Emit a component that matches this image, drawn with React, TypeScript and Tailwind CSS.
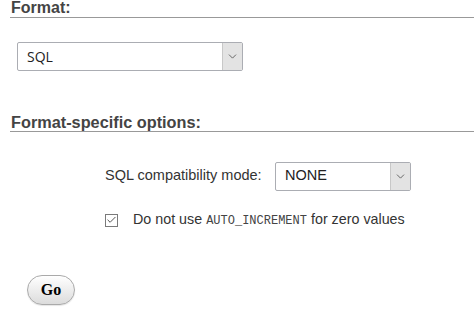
import { Check, ChevronDown } from "lucide-react";

function Select({ value, width, font }: { value: string; width: string; font: string }) {
  return (
    <div
      className={`${width} h-[29px] flex items-stretch border border-[#abadb3] bg-white rounded-[2px] text-[#222] ${font}`}
    >
      <div className="flex-1 flex items-center pl-[9px]">{value}</div>
      <div className="w-[20px] flex items-center justify-center bg-[#e3e3e3] border-l border-[#c8c8c8]">
        <ChevronDown size={13} strokeWidth={1.6} className="text-[#555]" />
      </div>
    </div>
  );
}

export default function App() {
  return (
    <div className="w-[474px] h-[317px] bg-white pl-[10px] font-['Liberation_Sans',Arial,sans-serif] text-[#333]">
      <h2 className="h-[18px] leading-[16px] pl-[1px] text-[16px] font-bold text-[#444] border-b border-[#999]">
        Format:
      </h2>

      <div className="mt-[24px] ml-[7px]">
        <Select value="SQL" width="w-[226px]" font="font-['Open_Sans',sans-serif] text-[14px]" />
      </div>

      <h2 className="mt-[43px] h-[18px] leading-[16px] pl-[1px] text-[16.3px] font-bold text-[#444] border-b border-[#999]">
        Format-specific options:
      </h2>

      <div className="ml-[95px]">
        <div className="mt-[30px] flex items-center h-[28px]">
          <label className="text-[14.5px] w-[170px]">SQL compatibility mode:</label>
          <Select value="NONE" width="w-[136px]" font="font-['Liberation_Sans',Arial,sans-serif] text-[14.5px]" />
        </div>

        <div className="mt-[21px] flex items-center h-[18px] text-[14.3px]">
          <span className="w-[13px] h-[13px] border border-[#7a7a7a] bg-white flex items-center justify-center">
            <Check size={12} strokeWidth={2} className="text-[#444]" />
          </span>
          <span className="ml-[15px]">
            Do not use{" "}
            <code className="font-['Liberation_Mono','Courier_New',monospace] text-[12px] text-[#444]">
              AUTO_INCREMENT
            </code>{" "}
            for zero values
          </span>
        </div>
      </div>

      <button className="mt-[46px] ml-[17px] w-[48px] h-[30px] rounded-full border border-[#aaa] bg-gradient-to-b from-white to-[#dcdcdc] font-['Liberation_Serif','Times_New_Roman',serif] font-bold text-[16px] text-black shadow-[0_1px_1px_rgba(0,0,0,0.1)]">
        Go
      </button>
    </div>
  );
}
